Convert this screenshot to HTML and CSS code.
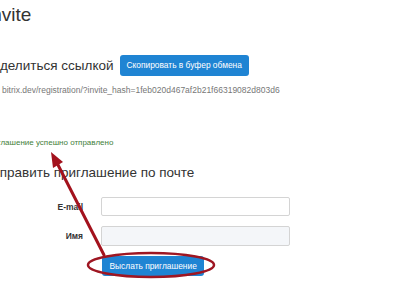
FILE: index.html
```html
<!DOCTYPE html>
<html lang="ru">
<head>
<meta charset="utf-8">
<title>Invite</title>
<link rel="stylesheet" href="styles.css">
</head>
<body>
<div class="page">
  <h1 class="title">Invite</h1>
  <div class="share">
    <h3 class="heading">Поделиться ссылкой</h3>
    <button class="btn" type="button">Скопировать в буфер обмена</button>
  </div>
  <p class="link">bitrix.dev/registration/?invite_hash=1feb020d467af2b21f66319082d803d6</p>
  <p class="success">Приглашение успешно отправлено</p>
  <h3 class="heading heading-mail">Отправить приглашение по почте</h3>
  <form class="form">
    <label class="label" for="email">E-mail</label>
    <input class="input" id="email" type="text">
    <label class="label" for="name">Имя</label>
    <input class="input input-filled" id="name" type="text">
    <span class="spacer"></span>
    <button class="btn btn-send" type="button">Выслать приглашение</button>
  </form>
</div>
<svg class="annot" width="403" height="294" viewBox="0 0 403 294" xmlns="http://www.w3.org/2000/svg">
  <ellipse cx="151" cy="265" rx="63" ry="12" fill="none" stroke="#9e1622" stroke-width="2.5"/>
  <line x1="104" y1="255" x2="56" y2="161" stroke="#a3121d" stroke-width="3" stroke-linecap="round"/>
  <polygon points="51,152 63,162 53,168" fill="#a3121d"/>
</svg>
</body>
</html>
```
FILE: styles.css
```css
html, body {
  margin: 0;
  padding: 0;
  background: #fff;
  overflow: hidden;
}

body {
  font-family: "Liberation Sans", Arial, sans-serif;
  color: #333;
  width: 403px;
  height: 294px;
  position: relative;
}

.page {
  margin-left: -17px;
  padding-top: 5px;
}

.title {
  margin: 0 0 0 3px;
  font-size: 19px;
  line-height: 20px;
  font-weight: normal;
  color: #333;
}

.share {
  display: flex;
  align-items: center;
  gap: 6px;
  margin-top: 30px;
}

.heading {
  margin: 0;
  font-size: 13.5px;
  line-height: 16px;
  font-weight: normal;
  color: #333;
}

.btn {
  height: 21px;
  padding: 0 7px;
  border: 0;
  border-radius: 3px;
  background: #1f84d3;
  color: #fff;
  font-family: "Liberation Sans", Arial, sans-serif;
  font-size: 8.4px;
  line-height: 21px;
  cursor: pointer;
}

.link {
  margin: 8.5px 0 0 19px;
  font-size: 8.5px;
  line-height: 10px;
  color: #777;
}

.success {
  margin: 43.5px 0 0;
  font-size: 8px;
  line-height: 10px;
  color: #43803a;
}

.heading-mail {
  margin-top: 16.8px;
}

.form {
  display: grid;
  grid-template-columns: 100px 189px;
  column-gap: 18px;
  row-gap: 10px;
  margin-top: 16.2px;
}

.label {
  align-self: center;
  justify-self: end;
  font-size: 8.5px;
  font-weight: bold;
  color: #333;
}

.input {
  box-sizing: border-box;
  height: 19.5px;
  width: 189px;
  margin: 0;
  border: 1px solid #d4d4d4;
  border-radius: 2px;
  background: #fff;
}

.input-filled {
  background: #f4f6f9;
}

.btn-send {
  justify-self: start;
  height: 20px;
  line-height: 20px;
  margin-left: 1px;
  padding: 0 7.5px;
}

.annot {
  position: absolute;
  top: 0;
  left: 0;
  pointer-events: none;
}
```
